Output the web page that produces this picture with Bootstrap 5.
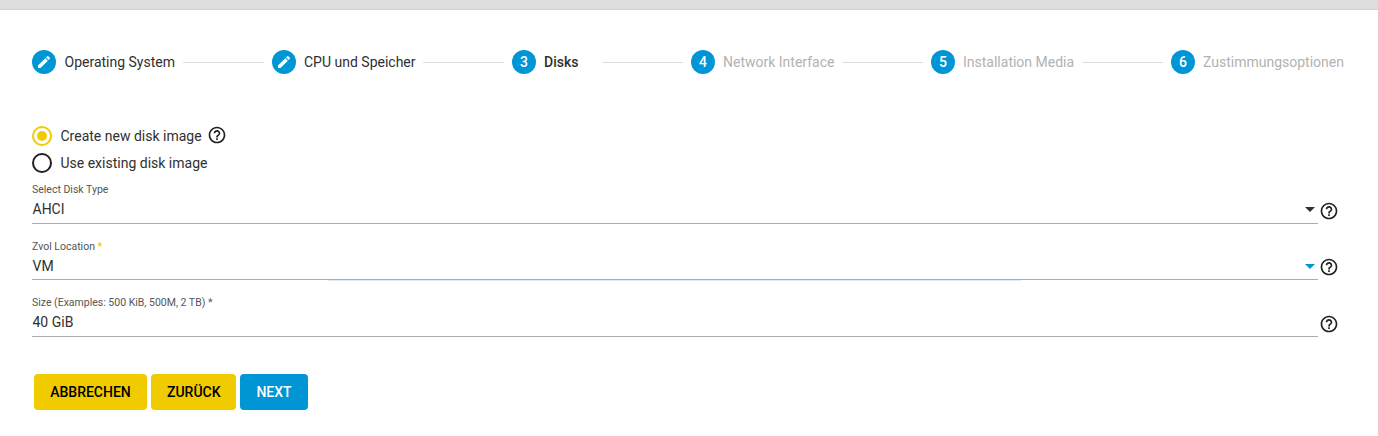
<!DOCTYPE html>
<html lang="de">
<head>
<meta charset="utf-8">
<meta name="viewport" content="width=device-width, initial-scale=1">
<title>Disks</title>
<link href="https://cdn.jsdelivr.net/npm/bootstrap@5.3.0/dist/css/bootstrap.min.css" rel="stylesheet">
<script src="https://cdn.jsdelivr.net/npm/bootstrap@5.3.0/dist/js/bootstrap.bundle.min.js" defer></script>
<style>
body { font-family: Roboto, "Liberation Sans", sans-serif; font-size: 14px; line-height: 20px; color: #303030; background: #fff; }
.topbar { height: 10px; background: #ddd; border-bottom: 1px solid #d0d0d0; }
.wizard { padding: 40px 34px 0 32px; }
.stepper { height: 24px; }
.step-dot { width: 24px; height: 24px; background: #0095d5; color: #fff; flex: none; font-weight: 500; }
.step-label { margin-left: 8px; width: 111px; white-space: nowrap; flex: none; }
.step-label.first { padding-left: .5px; }
.step-label.short { width: 50px; font-weight: 500; }
.step-label.last { width: 141px; }
.step-label.idle { color: #b2b2b2; }
.step-line { height: 1px; background: #dedede; margin: 0 8px; }
.choices { margin-top: 52px; }
.choice { height: 27px; }
.choice-ring { width: 20px; height: 20px; border: 2px solid #212121; flex: none; margin-right: 8.5px; }
.choice-ring.on { border-color: #f0cb00; }
.choice-ring.on::after { content: ""; width: 10px; height: 10px; border-radius: 50%; background: #f0cb00; }
.help { width: 20px; height: 20px; fill: #212121; flex: none; display: block; }
.choice .help { margin: -1px 0 0 5px; }
.fields { margin-top: 3px; }
.field-row { height: 57px; }
.field-row .help { margin: 18px 0 0 .5px; }
.field { height: 41px; width: 1286px; border-bottom: 1px solid #aeaeae; position: relative; }
.field-row.compact { height: 56px; }
.compact .field { height: 40px; }
.compact .help { margin-top: 17px; }
.field-label { font-size: 10.5px; line-height: 14px; color: #555; }
.field-label .required { color: #fdc300; font-weight: 500; }
.field-value { line-height: 20px; margin-top: 2px; padding-left: .5px; }
.arrow { width: 0; height: 0; border: 5px solid transparent; border-top-color: #303030; border-bottom: 0; margin-right: 3px; }
.arrow.blue { border-top-color: #0095d5; }
.ripple { position: absolute; left: 296px; width: 693px; bottom: -2px; height: 1px; background: #dceff9; }
.actions { margin: 21px 0 0 2px; gap: 4px; }
.act { height: 36px; padding: 1px 16px 0; font-size: 14px; font-weight: 500; border: 0; border-radius: 4px; background: #f0cb00; color: #000; }
.act-cancel { width: 113px; }
.act-back { width: 85px; }
.act-next { background: #0095d5; color: #fff; width: 68px; }
</style>
</head>
<body>
<svg class="d-none">
  <symbol id="help" viewBox="0 0 24 24"><path d="M11 18h2v-2h-2v2zm1-16C6.480 2 2 6.480 2 12s4.480 10 10 10 10-4.480 10-10S17.520 2 12 2zm0 18c-4.410 0-8-3.590-8-8s3.590-8 8-8 8 3.590 8 8-3.590 8-8 8zm0-14c-2.210 0-4 1.790-4 4h2c0-1.100.9-2 2-2s2 .9 2 2c0 2-3 1.750-3 5h2c0-2.250 3-2.500 3-5 0-2.210-1.790-4-4-4z"/></symbol>
  <symbol id="pen" viewBox="0 0 24 24"><path d="M3 17.250V21h3.750L17.810 9.940l-3.750-3.750L3 17.250zM20.710 7.040c.39-.39.39-1.020 0-1.410l-2.340-2.340c-.39-.39-1.020-.39-1.410 0l-1.830 1.830 3.750 3.750 1.830-1.830z"/></symbol>
</svg>
<div class="topbar"></div>
<main class="wizard">
  <div class="stepper d-flex align-items-center">
    <span class="step-dot rounded-circle d-flex align-items-center justify-content-center"><svg width="16" height="16" fill="#fff"><use href="#pen"/></svg></span><span class="step-label first">Operating System</span>
    <span class="step-line flex-fill"></span>
    <span class="step-dot rounded-circle d-flex align-items-center justify-content-center"><svg width="16" height="16" fill="#fff"><use href="#pen"/></svg></span><span class="step-label">CPU und Speicher</span>
    <span class="step-line flex-fill"></span>
    <span class="step-dot rounded-circle d-flex align-items-center justify-content-center">3</span><span class="step-label short">Disks</span>
    <span class="step-line flex-fill"></span>
    <span class="step-dot rounded-circle d-flex align-items-center justify-content-center">4</span><span class="step-label idle">Network Interface</span>
    <span class="step-line flex-fill"></span>
    <span class="step-dot rounded-circle d-flex align-items-center justify-content-center">5</span><span class="step-label idle">Installation Media</span>
    <span class="step-line flex-fill"></span>
    <span class="step-dot rounded-circle d-flex align-items-center justify-content-center">6</span><span class="step-label last idle">Zustimmungsoptionen</span>
  </div>

  <div class="choices">
    <div class="choice d-flex align-items-start">
      <span class="choice-ring on rounded-circle d-flex align-items-center justify-content-center"></span><span>Create new disk image</span>
      <svg class="help"><use href="#help"/></svg>
    </div>
    <div class="choice d-flex align-items-start">
      <span class="choice-ring rounded-circle"></span><span>Use existing disk image</span>
    </div>
  </div>

  <div class="fields">
    <div class="field-row d-flex">
      <div class="field">
        <div class="field-label">Select Disk Type</div>
        <div class="field-value d-flex justify-content-between align-items-center">AHCI<span class="arrow"></span></div>
      </div>
      <svg class="help"><use href="#help"/></svg>
    </div>
    <div class="field-row compact d-flex">
      <div class="field">
        <div class="field-label">Zvol Location <span class="required">*</span></div>
        <div class="field-value d-flex justify-content-between align-items-center">VM<span class="arrow blue"></span></div>
        <span class="ripple"></span>
      </div>
      <svg class="help"><use href="#help"/></svg>
    </div>
    <div class="field-row d-flex">
      <div class="field">
        <div class="field-label">Size (Examples: 500 KiB, 500M, 2 TB) *</div>
        <div class="field-value">40 GiB</div>
      </div>
      <svg class="help"><use href="#help"/></svg>
    </div>
  </div>

  <div class="actions d-flex">
    <button class="btn act act-cancel" type="button">ABBRECHEN</button>
    <button class="btn act act-back" type="button">ZURÜCK</button>
    <button class="btn act act-next" type="button">NEXT</button>
  </div>
</main>
</body>
</html>
